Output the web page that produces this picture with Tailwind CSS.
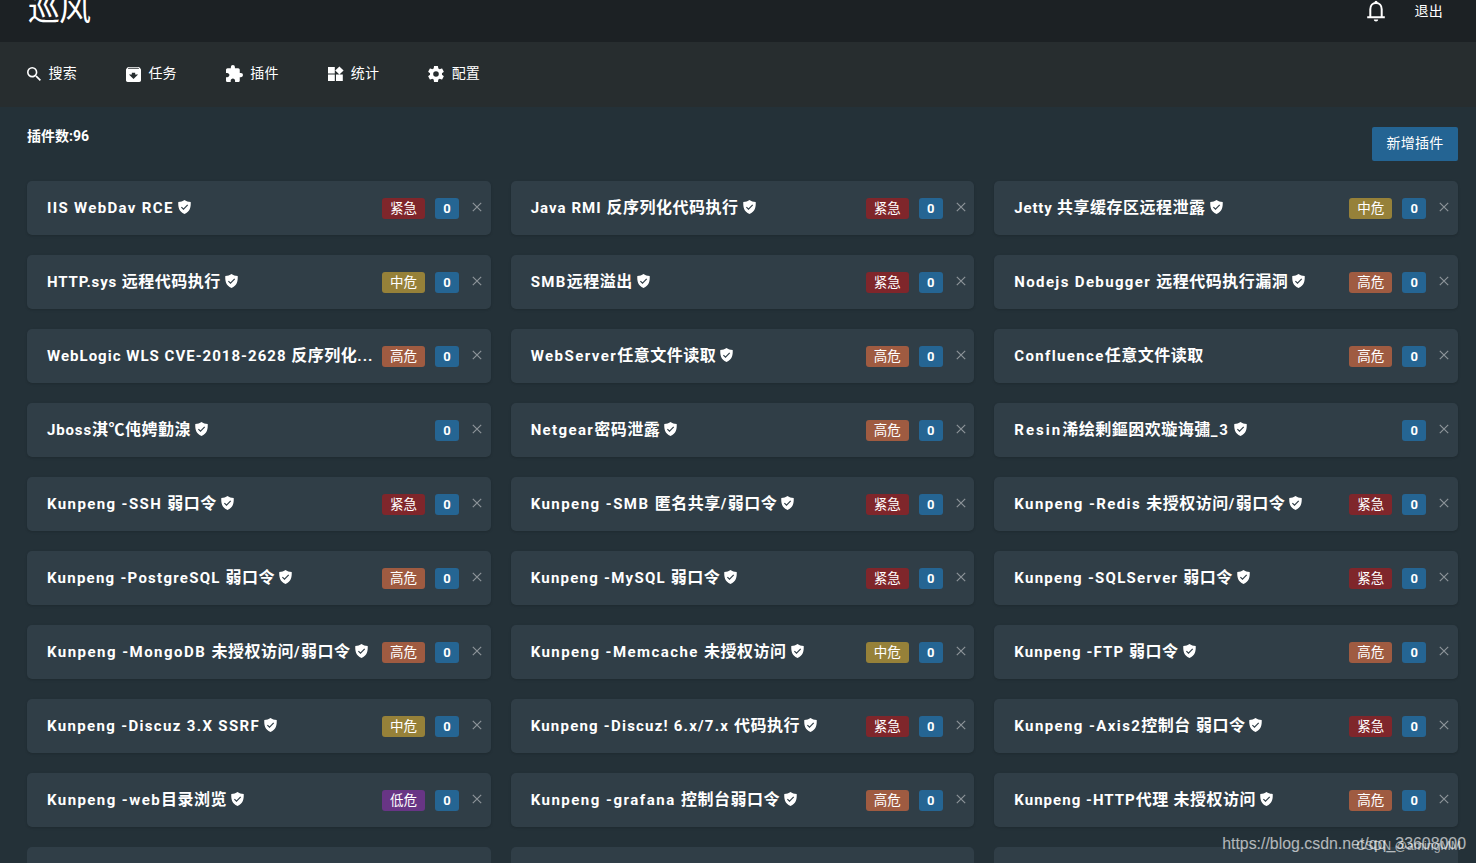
<!DOCTYPE html>
<html lang="zh-CN">
<head>
    <meta charset="utf-8" />
    <title>巡风</title>
    <meta name="viewport" content="width=device-width, initial-scale=1" />
    <script src="https://cdn.jsdelivr.net/npm/@tailwindcss/browser@4"></script>
</head>
<body class="relative h-screen overflow-hidden bg-[#243138] font-[Roboto,'Noto_Sans_CJK_SC',sans-serif] text-sm text-white">
    <svg class="hidden">
        <symbol id="shield" viewBox="0 0 13 14">
            <path fill="#fff" d="M6.500 0C4.800 1.200 2.800 1.900.3 2 0 6.800.8 11.600 6.500 14 12.200 11.600 13 6.800 12.700 2 10.200 1.900 8.200 1.200 6.500 0z"/>
            <path fill="none" stroke="#303e47" stroke-width="1.200" d="M3.400 7.100l2.100 2 4.200-4.300"/>
        </symbol>
        <symbol id="close" viewBox="0 0 10 10">
            <path fill="none" stroke="#8d9499" stroke-width="1.200" d="M.8.8l8.400 8.400M9.200.8L.8 9.200"/>
        </symbol>
    </svg>

    <header class="flex h-[42px] items-start justify-between bg-[#1c2124] pl-7 pr-[33px]">
        <div class="-mt-[11px] text-[32px] leading-[40px] font-normal tracking-[-1px]">巡风</div>
        <div class="flex h-[22px] items-center gap-7">
            <svg class="-mt-px" width="20" height="22" viewBox="0 0 20 22">
                <path fill="#fff" d="M10 21.500c1.200 0 2.200-.9 2.200-2H7.800c0 1.100 1 2 2.200 2z"/>
                <path fill="none" stroke="#fff" stroke-width="2" d="M1.200 17.300h17.600M4.300 17V9.300C4.300 5.600 6.700 3 10 3s5.700 2.600 5.700 6.300V17"/>
                <path fill="#fff" d="M8.500 3.500V2.200a1.500 1.500 0 0 1 3 0v1.300z"/>
            </svg>
            <a class="tracking-[0.3px]">退出</a>
        </div>
    </header>

    <nav class="flex h-[65px] items-center gap-[49px] bg-[#272d2f] pl-[27px] pb-[3px]">
        <a class="flex items-center gap-[7.500px] tracking-[0.2px]">
            <svg class="mt-px" width="14" height="14" viewBox="3 3 17.500 17.500"><path fill="#fff" d="M15.500 14h-.79l-.28-.27A6.470 6.470 0 0 0 16 9.500 6.500 6.500 0 1 0 9.500 16c1.610 0 3.090-.59 4.230-1.570l.27.28v.79l5 4.990L20.490 19l-4.990-5zm-6 0C7.010 14 5 11.990 5 9.500S7.010 5 9.500 5 14 7.010 14 9.500 11.990 14 9.500 14z"/></svg>
            搜索
        </a>
        <a class="flex items-center gap-[7.500px] tracking-[0.2px]">
            <svg class="mt-0.5" width="15" height="15" viewBox="3 3 18 18"><path fill="#fff" d="M20.540 5.230l-1.390-1.680C18.880 3.210 18.470 3 18 3H6c-.47 0-.88.21-1.160.55L3.460 5.230C3.170 5.570 3 6.020 3 6.500V19c0 1.100.9 2 2 2h14c1.100 0 2-.9 2-2V6.500c0-.48-.17-.93-.46-1.270zM12 17.500L6.500 12H10v-2h4v2h3.500L12 17.500zM5.120 5l.81-1h12l.94 1H5.120z"/></svg>
            任务
        </a>
        <a class="flex items-center gap-[7.500px] tracking-[0.2px]">
            <svg class="mt-px" width="17" height="17" viewBox="2 1 21 21"><path fill="#fff" d="M20.500 11H19V7c0-1.100-.9-2-2-2h-4V3.500a2.500 2.500 0 0 0-5 0V5H4c-1.100 0-1.990.9-1.990 2v3.800H3.500c1.490 0 2.700 1.210 2.700 2.700s-1.210 2.700-2.700 2.700H2V20c0 1.100.9 2 2 2h3.800v-1.500c0-1.490 1.210-2.700 2.700-2.700s2.700 1.210 2.700 2.700V22H17c1.100 0 2-.9 2-2v-4h1.500a2.500 2.500 0 0 0 0-5z"/></svg>
            插件
        </a>
        <a class="flex items-center gap-[7.500px] tracking-[0.2px]">
            <svg class="mt-px overflow-visible" width="15.500" height="14" viewBox="0 0 15.500 14"><path fill="#fff" d="M0 0h6.800v6.500H0zM0 7.500h6.800V14H0zM8 7.500h6.800V14H8zM11.400-.6l4.200 4.100-4.200 4.100-4.200-4.100z"/></svg>
            统计
        </a>
        <a class="flex items-center gap-[7.500px] tracking-[0.2px]">
            <svg class="mt-0.5" width="16" height="16" viewBox="2 2 20 20"><path fill="#fff" d="M19.430 12.980c.04-.32.07-.64.07-.98s-.03-.66-.07-.98l2.110-1.650c.19-.15.24-.42.12-.64l-2-3.460c-.12-.22-.39-.3-.61-.22l-2.490 1c-.52-.4-1.080-.73-1.690-.98l-.38-2.650A.49.49 0 0 0 14 2h-4c-.25 0-.46.18-.49.42l-.38 2.650c-.61.25-1.170.59-1.690.98l-2.490-1c-.23-.09-.49 0-.61.22l-2 3.460c-.13.22-.07.49.12.64l2.110 1.650c-.04.32-.07.65-.07.98s.03.66.07.98l-2.110 1.650c-.19.15-.24.42-.12.64l2 3.460c.12.22.39.3.61.22l2.490-1c.52.4 1.080.73 1.690.98l.38 2.650c.03.24.24.42.49.42h4c.25 0 .46-.18.49-.42l.38-2.650c.61-.25 1.170-.59 1.690-.98l2.490 1c.23.09.49 0 .61-.22l2-3.460c.12-.22.07-.49-.12-.64l-2.110-1.650zM12 15.500a3.500 3.500 0 1 1 0-7 3.500 3.500 0 0 1 0 7z"/></svg>
            配置
        </a>
    </nav>

    <main class="pl-[27px] pr-[18px] pt-5">
        <div class="mb-5 flex items-start justify-between">
            <h4 class="leading-[18px] font-bold">插件数:96</h4>
            <button class="h-[34px] w-[86px] rounded-xs bg-[#246493] pb-0.5 text-sm tracking-[0.2px]">新增插件</button>
        </div>
        <div id="plugins" class="grid grid-cols-3 gap-5"></div>
    </main>

    <div class="absolute right-[10px] bottom-[9px] text-[15.900px] leading-5 whitespace-nowrap text-white/65 font-['Liberation_Sans',Arial,sans-serif]">https://blog.csdn.net/qq_33608000</div>
    <div class="absolute right-[15px] bottom-[9px] text-[12.300px] leading-4 whitespace-nowrap text-white/60 font-['Liberation_Sans',Arial,sans-serif]">CSDN @amingMM</div>

    <script>
        const levels = {
            '紧急': 'bg-[#7f262b]',
            '高危': 'bg-[#9f5b41]',
            '中危': 'bg-[#968139]',
            '低危': 'bg-[#683585]'
        };
        // [name, level, verified, tracking in px]
        const plugins = [
            ['IIS WebDav RCE', '紧急', 1, 1.33],
            ['Java RMI 反序列化代码执行', '紧急', 1, 1.05],
            ['Jetty 共享缓存区远程泄露', '中危', 1, 0.8],
            ['HTTP.sys 远程代码执行', '中危', 1, 0.85],
            ['SMB远程溢出', '紧急', 1, 1.4],
            ['Nodejs Debugger 远程代码执行漏洞', '高危', 1, 1.36],
            ['WebLogic WLS CVE-2018-2628 反序列化...', '高危', 0, 1.02],
            ['WebServer任意文件读取', '高危', 1, 1.46],
            ['Confluence任意文件读取', '高危', 0, 1.35],
            ['Jboss淇℃伅娉勭湶', '', 1, 0.85],
            ['Netgear密码泄露', '高危', 1, 1.37],
            ['Resin浠绘剰鏂囦欢璇诲彇_3', '', 1, 2],
            ['Kunpeng -SSH 弱口令', '紧急', 1, 1.4],
            ['Kunpeng -SMB 匿名共享/弱口令', '紧急', 1, 1.46],
            ['Kunpeng -Redis 未授权访问/弱口令', '紧急', 1, 1.4],
            ['Kunpeng -PostgreSQL 弱口令', '高危', 1, 1.25],
            ['Kunpeng -MySQL 弱口令', '紧急', 1, 1.25],
            ['Kunpeng -SQLServer 弱口令', '紧急', 1, 1.27],
            ['Kunpeng -MongoDB 未授权访问/弱口令', '高危', 1, 1.47],
            ['Kunpeng -Memcache 未授权访问', '中危', 1, 1.44],
            ['Kunpeng -FTP 弱口令', '高危', 1, 1.1],
            ['Kunpeng -Discuz 3.X SSRF', '中危', 1, 1.34],
            ['Kunpeng -Discuz! 6.x/7.x 代码执行', '紧急', 1, 1.22],
            ['Kunpeng -Axis2控制台 弱口令', '紧急', 1, 1.4],
            ['Kunpeng -web目录浏览', '低危', 1, 1.43],
            ['Kunpeng -grafana 控制台弱口令', '高危', 1, 1.5],
            ['Kunpeng -HTTP代理 未授权访问', '高危', 1, 1.03]
        ];
        const card = ([name, level, verified, tracking]) => `
            <div class="flex h-[54px] items-center rounded-[5px] bg-[#303e47] pl-[20px] pr-[8.700px] shadow-sm shadow-black/10">
                <h2 class="flex min-w-0 flex-1 items-center gap-1 text-[15px] leading-6 font-bold whitespace-pre" style="letter-spacing: ${tracking}px">
                    <span>${name.replace(/[℃\u4e00-\u9fff]+/g, '<span class="text-base leading-6 tracking-[0.5px]">$&</span>')}</span>
                    ${verified ? '<svg class="shrink-0 -mt-0.5" width="13" height="14"><use href="#shield"/></svg>' : ''}
                </h2>
                ${level ? `<span class="mr-2.5 h-[21px] w-[43px] rounded-[3px] text-center text-[13.500px] leading-[20px] ${levels[level]}">${level}</span>` : ''}
                <span class="mr-[13px] h-[21px] w-6 rounded-[3px] bg-[#256593] text-center text-[13px] leading-[21px] font-bold">0</span>
                <svg class="-mt-[3px]" width="10" height="10"><use href="#close"/></svg>
            </div>`;
        // the next row starts at the bottom edge of the window
        document.getElementById('plugins').innerHTML = plugins.map(card).join('')
            + '<div class="h-[54px] rounded-[5px] bg-[#303e47]"></div>'.repeat(3);
    </script>
</body>
</html>
